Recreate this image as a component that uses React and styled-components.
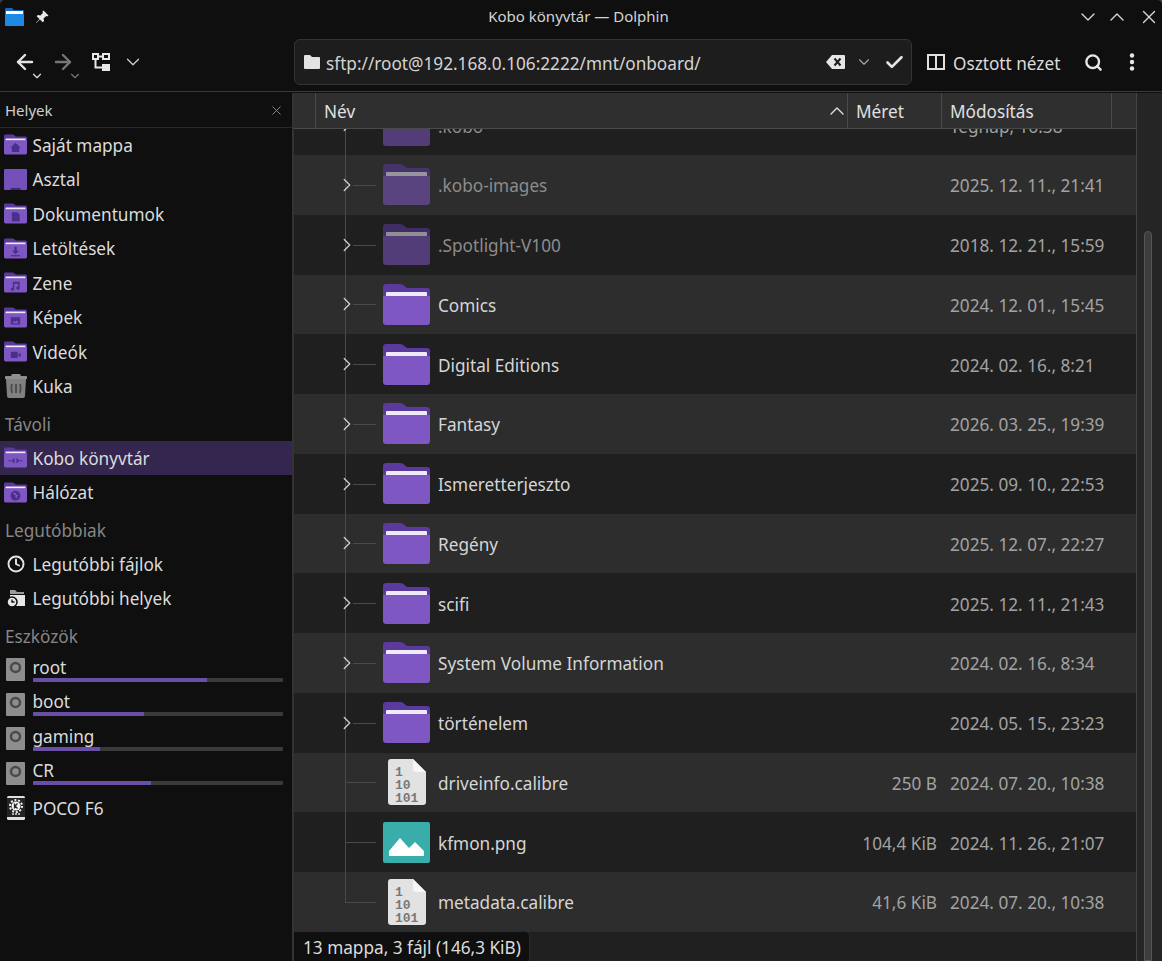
import React from "react";
import styled, { createGlobalStyle } from "styled-components";
import { ArrowLeft, ArrowRight, Check, ChevronDown, ChevronRight, ChevronUp, Clock, Search, X } from "lucide-react";

const GlobalStyle = createGlobalStyle`
  html, body {
    margin: 0;
    background: #3c3c3c;
  }
  * {
    box-sizing: border-box;
  }
`;

const Window = styled.div`
  width: 1162px;
  height: 961px;
  display: flex;
  flex-direction: column;
  overflow: hidden;
  background: #0f0f10;
  border-radius: 5px 5px 0 0;
  color: #dcdcdc;
  font-family: "Noto Sans", sans-serif;
  font-size: 17.2px;
`;

const TitleBar = styled.header`
  height: 34px;
  flex: none;
  display: grid;
  grid-template-columns: 1fr auto 1fr;
  align-items: center;
`;

const TitleLeft = styled.div`
  display: flex;
  align-items: center;
  gap: 11px;
  padding-left: 5px;
`;

const Title = styled.div`
  font-size: 15px;
  color: #d4d4d4;
  margin: 0 5px 2px 0;
`;

const WindowButtons = styled.div`
  display: flex;
  align-items: center;
  justify-content: flex-end;
  gap: 5px;
  padding-right: 2px;
  color: #d8d8d8;
`;

const CloseIcon = styled(X)`
  margin-left: 4px;
`;

const Toolbar = styled.div`
  height: 58px;
  flex: none;
  display: flex;
  align-items: center;
  border-bottom: 1px solid #3a3a3a;
  padding-bottom: 1px;
`;

const NavGroup = styled.div`
  width: 294px;
  flex: none;
  display: flex;
  align-items: center;
  padding-left: 6px;
`;

const NavButton = styled.div`
  position: relative;
  width: ${(p) => p.$w || 38}px;
  height: 30px;
  display: flex;
  align-items: center;
  justify-content: center;
  color: ${(p) => (p.$off ? "#777" : "#e4e4e4")};
`;

const MiniChevron = styled(ChevronDown)`
  position: absolute;
  left: 24px;
  top: 22px;
`;

const LocationBar = styled.div`
  width: 618px;
  height: 46px;
  flex: none;
  display: flex;
  align-items: center;
  gap: 6px;
  padding: 0 6.5px 0 9px;
  background: #1d1d1d;
  border: 1px solid #333;
  border-radius: 6px;
`;

const Path = styled.div`
  flex: 1;
  padding-top: 3px;
  color: #d4d4d4;
`;

const LocationActions = styled.div`
  display: flex;
  align-items: center;
  gap: 10.5px;
  color: #e4e4e4;
`;

const SplitButton = styled.div`
  display: flex;
  align-items: center;
  gap: 8px;
  margin-left: 15px;
  color: #dcdcdc;
`;

const SplitLabel = styled.span`
  padding-top: 3px;
`;

const ToolIcons = styled.div`
  display: flex;
  align-items: center;
  gap: 26px;
  margin-left: 24px;
  color: #e6e6e6;
`;

const Main = styled.div`
  flex: 1;
  min-height: 0;
  display: flex;
`;

const Sidebar = styled.aside`
  width: 292px;
  flex: none;
`;

const PanelHead = styled.div`
  height: 35.5px;
  display: flex;
  align-items: center;
  justify-content: space-between;
  padding: 2px 8px 0 5px;
  border-bottom: 1px solid #2a2a2a;
  font-size: 15px;
  color: #cfcfcf;
`;

const SectionHead = styled.div`
  height: 37px;
  padding: 9px 0 0 5px;
  line-height: 24px;
  color: #868686;
`;

const Place = styled.div`
  height: 34.5px;
  display: flex;
  align-items: center;
  gap: 5.5px;
  padding-left: 4px;
  background: ${(p) => (p.$active ? "#35264f" : "transparent")};
`;

const PlaceIcon = styled.div`
  width: 23px;
  height: 24px;
  flex: none;
  display: flex;
  align-items: center;
  justify-content: center;
`;

const PlaceLabel = styled.span`
  padding-top: 1px;
`;

const DeviceBody = styled.div`
  flex: 1;
  display: flex;
  flex-direction: column;
  padding-right: 9px;
`;

const DeviceLabel = styled.div`
  height: 20px;
  line-height: 20px;
`;

const Usage = styled.div`
  height: 4px;
  border-radius: 1px;
  background: #3a3a3a;
  overflow: hidden;
`;

const UsageFill = styled.div`
  height: 100%;
  background: #6a4fa6;
`;

const Content = styled.section`
  position: relative;
  flex: 1;
  min-width: 0;
  display: flex;
  flex-direction: column;
  margin-top: 1px;
  border-left: 2px solid #333;
`;

const Columns = styled.div`
  height: 36px;
  flex: none;
  display: grid;
  grid-template-columns: 22px 532px 94px 170px 1fr 26px;
  background: #2f2f2f;
  border-bottom: 1px solid #4a4a4a;
`;

const ColumnHead = styled.div`
  display: flex;
  align-items: center;
  justify-content: space-between;
  padding: 2px 8px 0;
  border-right: 1px solid #4a4a4a;
  color: #e0e0e0;
`;

const SortIcon = styled(ChevronUp)`
  margin: -2px -10px 0 0;
`;

const Gutter = styled.div`
  border-right: 1px solid #4a4a4a;
`;

const ColumnEnd = styled.div`
  grid-column: 5;
`;

const ScrollCorner = styled.div`
  grid-column: 6;
  margin-bottom: -1px;
  background: #252525;
  border-left: 1px solid #444;
`;

const ListArea = styled.div`
  flex: 1;
  min-height: 0;
  display: flex;
`;

const FileList = styled.div`
  flex: 1;
  min-width: 0;
  overflow: hidden;
  background: #202020;
`;

const Rows = styled.div`
  margin-top: -33.75px;
`;

const Row = styled.div`
  height: 59.75px;
  display: grid;
  grid-template-columns: 89px 47px 1fr auto 186px;
  align-items: center;
  background: #1f1f1f;
  color: ${(p) => (p.$dim ? "#8c8c8c" : "#d6d6d6")};

  &:nth-child(even) {
    background: #2d2d2d;
  }
`;

const Tree = styled.div`
  position: relative;
  height: 100%;
  color: #d0d0d0;

  &::before {
    content: "";
    position: absolute;
    left: 51px;
    top: 0;
    bottom: ${(p) => (p.$last ? "50%" : "0")};
    width: 1px;
    background: #4a4a4a;
  }

  &::after {
    content: "";
    position: absolute;
    left: ${(p) => (p.$branch ? 59 : 51)}px;
    right: 7px;
    top: 50%;
    height: 1px;
    background: #4a4a4a;
  }

  svg {
    position: absolute;
    left: 42px;
    top: calc(50% - 11px);
  }
`;

const RowIcon = styled.div`
  display: flex;
  justify-content: center;
  opacity: ${(p) => (p.$dim ? 0.55 : 1)};
`;

const Name = styled.div`
  padding: 2px 0 0 8px;
`;

const Size = styled.div`
  padding: 2px 13px 0 0;
  color: #a2a2a2;
`;

const Modified = styled.div`
  padding-top: 2px;
  color: #a2a2a2;
`;

const ScrollTrack = styled.div`
  width: 26px;
  flex: none;
  padding: 102px 10px 0 7px;
  background: #252525;
  border-left: 1px solid #444;
`;

const ScrollThumb = styled.div`
  height: 100%;
  margin-bottom: -8px;
  background: #3d3d3d;
  border: 1px solid #555;
  border-radius: 5px 5px 0 0;
`;

const StatusBar = styled.div`
  position: absolute;
  left: 0;
  bottom: 0;
  height: 30px;
  display: flex;
  align-items: center;
  padding: 2px 8px 0 9px;
  background: #0f0f10;
  border-top: 1px solid #2a2a2a;
  border-right: 1px solid #2a2a2a;
  border-top-right-radius: 5px;
  color: #dcdcdc;
`;

const BinaryDigits = styled.text`
  font-family: "Liberation Mono", monospace;
  font-size: 13px;
  font-weight: 700;
  fill: #787878;
`;

const AppIcon = () => (
  <svg width="19" height="18" viewBox="0 0 19 18">
    <path d="M1 0h6l2 2h9a1 1 0 0 1 1 1v14a1 1 0 0 1-1 1H1a1 1 0 0 1-1-1V1a1 1 0 0 1 1-1z" fill="#1565c0" />
    <rect x="1" y="3" width="17" height="3" fill="#fff" />
    <rect y="6" width="19" height="12" rx="1" fill="#1e88e5" />
  </svg>
);

const PinIcon = () => (
  <svg width="14" height="14" viewBox="0 0 14 14" fill="#e8e8e8">
    <path d="M8.5 0.5l5 5-1.3 1-1-.6-2.6 2.6.4 2.6-1.2 1.2-2.9-2.9L1 13.2 0.8 13l3.700-3.900-2.900-2.900 1.200-1.200 2.600.4 2.600-2.600-.6-1z" />
  </svg>
);

const TreeViewIcon = () => (
  <svg width="18" height="18" viewBox="0 0 18 18" fill="none" stroke="#e8e8e8" strokeWidth="2">
    <rect x="1" y="1" width="5" height="5" />
    <rect x="11" y="1" width="6" height="5" />
    <path d="M6 3.500h5M3.500 6v8.500H11" />
    <rect x="11" y="12" width="6" height="5" fill="#e8e8e8" />
  </svg>
);

const PlainFolderIcon = () => (
  <svg width="16" height="14" viewBox="0 0 16 14" fill="#e2e2e2">
    <path d="M1 0h5l2 2h7a1 1 0 0 1 1 1v10a1 1 0 0 1-1 1H1a1 1 0 0 1-1-1V1a1 1 0 0 1 1-1z" />
  </svg>
);

const BackspaceIcon = () => (
  <svg width="19" height="14" viewBox="0 0 19 14">
    <path d="M6 0h12a1 1 0 0 1 1 1v12a1 1 0 0 1-1 1H6L0 7z" fill="#e6e6e6" />
    <path d="M8.500 3.500l6 7M14.500 3.500l-6 7" stroke="#1d1d1d" strokeWidth="2" />
  </svg>
);

const ColumnsIcon = () => (
  <svg width="18" height="16" viewBox="0 0 18 16" fill="none" stroke="#e0e0e0" strokeWidth="2">
    <rect x="1" y="1" width="16" height="14" />
    <path d="M9 1v14" />
  </svg>
);

const KebabIcon = () => (
  <svg width="6" height="18" viewBox="0 0 6 18" fill="#e6e6e6">
    <circle cx="3" cy="2.500" r="2.200" />
    <circle cx="3" cy="9" r="2.200" />
    <circle cx="3" cy="15.500" r="2.200" />
  </svg>
);

const Folder = ({ width = 47, height = 41, glyph }) => (
  <svg width={width} height={height} viewBox="0 0 47 41">
    <path d="M3 0h14q2 0 3.500 1.200L24 4h20a3 3 0 0 1 3 3v8H0V3a3 3 0 0 1 3-3z" fill="#5a3a9c" />
    <path d="M4 8h39a1 1 0 0 1 1 1v4H3V9a1 1 0 0 1 1-1z" fill="#efeaf8" />
    <path d="M0 12h47v26a3 3 0 0 1-3 3H3a3 3 0 0 1-3-3z" fill="#7e57c2" />
    {glyph && <g fill="#4a2f8c">{glyph}</g>}
  </svg>
);

const DesktopIcon = () => (
  <svg width="23" height="21" viewBox="0 0 23 21">
    <path d="M1 0h21a1 1 0 0 1 1 1v19a1 1 0 0 1-1 1H1a1 1 0 0 1-1-1V1a1 1 0 0 1 1-1z" fill="#7450bb" />
    <path d="M6 21l1-2h9l1 2z" fill="#3f2a78" />
  </svg>
);

const TrashIcon = () => (
  <svg width="22" height="24" viewBox="0 0 22 24">
    <path d="M7 0h8l1 2h5a1 1 0 0 1 1 1v2H0V3a1 1 0 0 1 1-1h5z" fill="#8f8f8f" />
    <path d="M1 5h20l-1 17a2 2 0 0 1-2 2H4a2 2 0 0 1-2-2z" fill="#808080" />
    <path d="M7 10q-1.500 4 0 9M11 10v9M15 10q1.500 4 0 9" stroke="#4e4e4e" strokeWidth="2" fill="none" />
  </svg>
);

const RecentPlacesIcon = () => (
  <svg width="18" height="18" viewBox="0 0 18 18">
    <path d="M3 1h5l2 2h7v2H3z" fill="#9a9a9a" />
    <path d="M3 6h15v11H3z" fill="#e6e6e6" />
    <circle cx="5" cy="13" r="5" fill="#e6e6e6" stroke="#0f0f10" strokeWidth="1.500" />
    <path d="M5 10.500V13h2.500" stroke="#0f0f10" strokeWidth="1.300" fill="none" />
  </svg>
);

const DiskIcon = () => (
  <svg width="19" height="23" viewBox="0 0 19 23">
    <rect width="19" height="23" rx="1" fill="#8d8d8d" />
    <circle cx="9.500" cy="9.500" r="4.500" fill="none" stroke="#4a4a4a" strokeWidth="2.500" />
  </svg>
);

const PhoneIcon = () => (
  <svg width="18" height="24" viewBox="0 0 18 24">
    <rect width="18" height="24" rx="1.500" fill="#e0e0e0" />
    <rect y="2" width="18" height="19" fill="#242424" />
    <circle cx="9" cy="10" r="4.500" fill="#f2f2f2" />
    <circle cx="9" cy="10" r="6" fill="none" stroke="#f2f2f2" strokeWidth="2" strokeDasharray="2 1.700" />
    <path d="M7.500 7.500v5M10.500 7.500L8 10l2.500 2.500" stroke="#242424" strokeWidth="1.300" fill="none" />
    <path d="M5 18h2M8 18h2M11 18h2" stroke="#e0e0e0" strokeWidth="1.500" />
  </svg>
);

const BinaryFileIcon = () => (
  <svg width="38" height="46" viewBox="0 0 38 46">
    <path d="M3 0h22l13 13v30a3 3 0 0 1-3 3H3a3 3 0 0 1-3-3V3a3 3 0 0 1 3-3z" fill="#e2e2e2" />
    <path d="M25 0l13 13H28a3 3 0 0 1-3-3z" fill="#f6f6f6" />
    <BinaryDigits x="7" y="17">1</BinaryDigits>
    <BinaryDigits x="7" y="30">10</BinaryDigits>
    <BinaryDigits x="7" y="43">101</BinaryDigits>
  </svg>
);

const ImageFileIcon = () => (
  <svg width="47" height="41" viewBox="0 0 47 41">
    <rect width="47" height="41" rx="2" fill="#38ada9" />
    <path d="M6 34V29L17 16l9 10 6-6 9 9v5z" fill="#fff" />
  </svg>
);

const glyphs = {
  home: <path d="M23.500 17L34 27h-3v9H16v-9h-3z" />,
  doc: <path d="M16 18h11l5 5v14H16z" />,
  download: (
    <>
      <path d="M21 17h5v8h5l-7.500 7-7.500-7h5z" />
      <rect x="14" y="34" width="19" height="2.500" />
    </>
  ),
  music: <path d="M18 19h14v13a3.500 3.500 0 1 1-3-3.400V23h-8v11a3.500 3.500 0 1 1-3-3.400z" />,
  images: <path d="M14 20h19v15H14zM17 32h13l-4-6-3 3-2-2z" fillRule="evenodd" />,
  video: <path d="M14 21h14v13H14zM29 26l5-3v9l-5-3z" />,
  remote: <path d="M21.500 21v12L15 27zM25.500 21v12L32 27zM9 26h6v2H9zM32 26h6v2h-6z" />,
  network: <path d="M23.500 17a10 10 0 1 1 0 20 10 10 0 0 1 0-20zM19 21l1 4 4 1-1 4 3 3 1-5 3-2-5-1-1-4z" fillRule="evenodd" />,
};

const places = [
  { label: "Saját mappa", glyph: "home" },
  { label: "Asztal", icon: <DesktopIcon /> },
  { label: "Dokumentumok", glyph: "doc" },
  { label: "Letöltések", glyph: "download" },
  { label: "Zene", glyph: "music" },
  { label: "Képek", glyph: "images" },
  { label: "Videók", glyph: "video" },
  { label: "Kuka", icon: <TrashIcon /> },
];

const devices = [
  { label: "root", used: 69.5 },
  { label: "boot", used: 44.5 },
  { label: "gaming", used: 27 },
  { label: "CR", used: 47.5 },
];

const files = [
  { name: ".kobo", date: "Tegnap, 16:38", dim: true },
  { name: ".kobo-images", date: "2025. 12. 11., 21:41", dim: true },
  { name: ".Spotlight-V100", date: "2018. 12. 21., 15:59", dim: true },
  { name: "Comics", date: "2024. 12. 01., 15:45" },
  { name: "Digital Editions", date: "2024. 02. 16., 8:21" },
  { name: "Fantasy", date: "2026. 03. 25., 19:39" },
  { name: "Ismeretterjeszto", date: "2025. 09. 10., 22:53" },
  { name: "Regény", date: "2025. 12. 07., 22:27" },
  { name: "scifi", date: "2025. 12. 11., 21:43" },
  { name: "System Volume Information", date: "2024. 02. 16., 8:34" },
  { name: "történelem", date: "2024. 05. 15., 23:23" },
  { name: "driveinfo.calibre", size: "250 B", date: "2024. 07. 20., 10:38", kind: "binary" },
  { name: "kfmon.png", size: "104,4 KiB", date: "2024. 11. 26., 21:07", kind: "image" },
  { name: "metadata.calibre", size: "41,6 KiB", date: "2024. 07. 20., 10:38", kind: "binary" },
];

function PlaceRow({ label, glyph, icon, active }) {
  return (
    <Place $active={active}>
      <PlaceIcon>{icon || <Folder width={23} height={21} glyph={glyphs[glyph]} />}</PlaceIcon>
      <PlaceLabel>{label}</PlaceLabel>
    </Place>
  );
}

function FileRow({ file, last }) {
  const isFolder = !file.kind;
  return (
    <Row $dim={file.dim}>
      <Tree $branch={isFolder} $last={last}>
        {isFolder && <ChevronRight size={22} strokeWidth={1.4} />}
      </Tree>
      <RowIcon $dim={file.dim}>
        {isFolder && <Folder />}
        {file.kind === "binary" && <BinaryFileIcon />}
        {file.kind === "image" && <ImageFileIcon />}
      </RowIcon>
      <Name>{file.name}</Name>
      <Size>{file.size}</Size>
      <Modified>{file.date}</Modified>
    </Row>
  );
}

export default function App() {
  return (
    <>
      <GlobalStyle />
      <Window>
        <TitleBar>
          <TitleLeft>
            <AppIcon />
            <PinIcon />
          </TitleLeft>
          <Title>Kobo könyvtár — Dolphin</Title>
          <WindowButtons>
            <ChevronDown size={24} strokeWidth={1.4} />
            <ChevronUp size={24} strokeWidth={1.4} />
            <CloseIcon size={22} strokeWidth={1.5} />
          </WindowButtons>
        </TitleBar>

        <Toolbar>
          <NavGroup>
            <NavButton>
              <ArrowLeft size={24} strokeWidth={2.4} />
              <MiniChevron size={14} strokeWidth={2} />
            </NavButton>
            <NavButton $off>
              <ArrowRight size={24} strokeWidth={2.4} />
              <MiniChevron size={14} strokeWidth={2} />
            </NavButton>
            <NavButton>
              <TreeViewIcon />
            </NavButton>
            <NavButton $w={26} $off>
              <ChevronDown size={22} strokeWidth={1.4} color="#cfcfcf" />
            </NavButton>
          </NavGroup>
          <LocationBar>
            <PlainFolderIcon />
            <Path>sftp://root@192.168.0.106:2222/mnt/onboard/</Path>
            <LocationActions>
              <BackspaceIcon />
              <ChevronDown size={18} strokeWidth={1.5} color="#a8a8a8" />
              <Check size={21} strokeWidth={3} />
            </LocationActions>
          </LocationBar>
          <SplitButton>
            <ColumnsIcon />
            <SplitLabel>Osztott nézet</SplitLabel>
          </SplitButton>
          <ToolIcons>
            <Search size={19} strokeWidth={3} />
            <KebabIcon />
          </ToolIcons>
        </Toolbar>

        <Main>
          <Sidebar>
            <PanelHead>
              Helyek
              <X size={15} strokeWidth={1.5} color="#8a8a8a" />
            </PanelHead>
            {places.map((p) => (
              <PlaceRow key={p.label} {...p} />
            ))}
            <SectionHead>Távoli</SectionHead>
            <PlaceRow label="Kobo könyvtár" glyph="remote" active />
            <PlaceRow label="Hálózat" glyph="network" />
            <SectionHead>Legutóbbiak</SectionHead>
            <PlaceRow label="Legutóbbi fájlok" icon={<Clock size={18} strokeWidth={2.6} color="#e4e4e4" />} />
            <PlaceRow label="Legutóbbi helyek" icon={<RecentPlacesIcon />} />
            <SectionHead>Eszközök</SectionHead>
            {devices.map((d) => (
              <Place key={d.label}>
                <PlaceIcon>
                  <DiskIcon />
                </PlaceIcon>
                <DeviceBody>
                  <DeviceLabel>{d.label}</DeviceLabel>
                  <Usage>
                    <UsageFill style={{ width: `${d.used}%` }} />
                  </Usage>
                </DeviceBody>
              </Place>
            ))}
            <PlaceRow label="POCO F6" icon={<PhoneIcon />} />
          </Sidebar>

          <Content>
            <Columns>
              <Gutter />
              <ColumnHead>
                Név
                <SortIcon size={24} strokeWidth={1.4} />
              </ColumnHead>
              <ColumnHead>Méret</ColumnHead>
              <ColumnHead>Módosítás</ColumnHead>
              <ColumnEnd />
              <ScrollCorner />
            </Columns>
            <ListArea>
              <FileList>
                <Rows>
                  {files.map((f, i) => (
                    <FileRow key={f.name} file={f} last={i === files.length - 1} />
                  ))}
                </Rows>
              </FileList>
              <ScrollTrack>
                <ScrollThumb />
              </ScrollTrack>
            </ListArea>
            <StatusBar>13 mappa, 3 fájl (146,3 KiB)</StatusBar>
          </Content>
        </Main>
      </Window>
    </>
  );
}
